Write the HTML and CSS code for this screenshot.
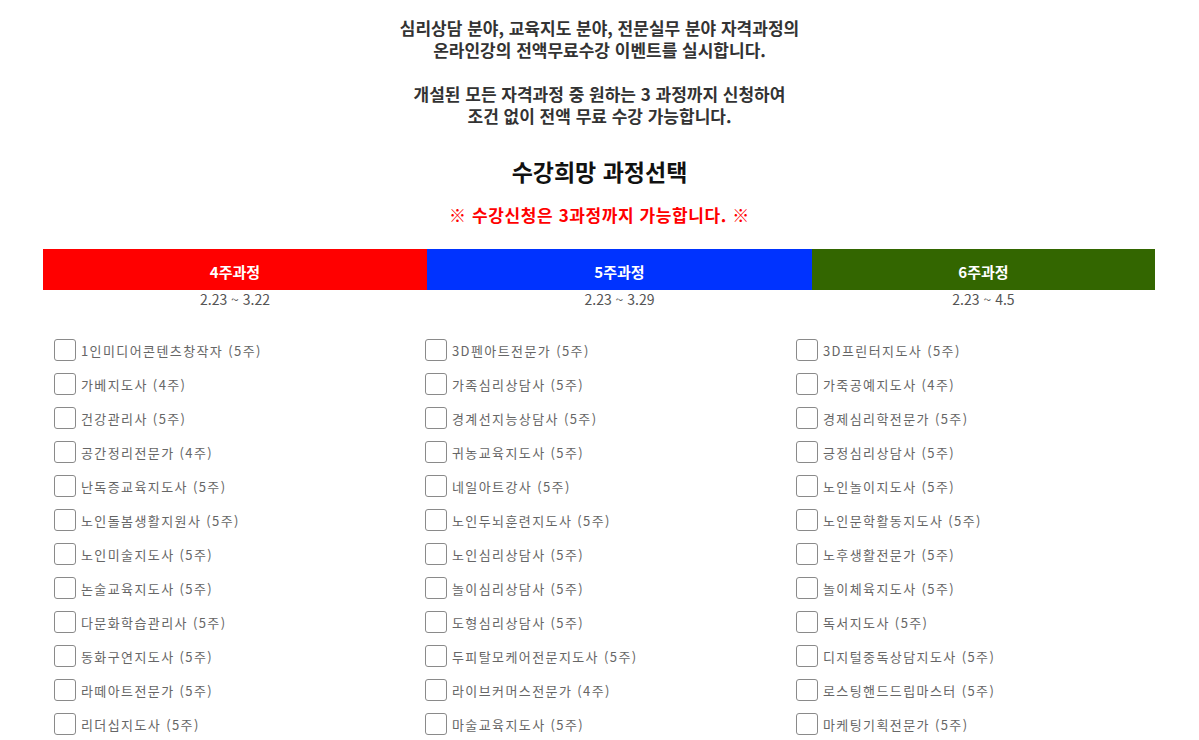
FILE: index.html
```html
<!DOCTYPE html>
<html lang="ko">
<head>
<meta charset="utf-8">
<title>수강희망 과정선택</title>
<link rel="stylesheet" href="styles.css">
</head>
<body>
<div class="page">
  <p class="intro">심리상담 분야, 교육지도 분야, 전문실무 분야 자격과정의<br>온라인강의 전액무료수강 이벤트를 실시합니다.<br><br>개설된 모든 자격과정 중 원하는 3 과정까지 신청하여<br>조건 없이 전액 무료 수강 가능합니다.</p>
  <h2 class="title">수강희망 과정선택</h2>
  <p class="notice">※ 수강신청은 3과정까지 가능합니다. ※</p>

  <div class="periods">
    <div class="period">
      <div class="bar bar-red">4주과정</div>
      <div class="date">2.23 ~ 3.22</div>
    </div>
    <div class="period">
      <div class="bar bar-blue">5주과정</div>
      <div class="date">2.23 ~ 3.29</div>
    </div>
    <div class="period">
      <div class="bar bar-green">6주과정</div>
      <div class="date">2.23 ~ 4.5</div>
    </div>
  </div>

  <div class="courses">
    <label class="course"><input type="checkbox"><span>1인미디어콘텐츠창작자 (5주)</span></label>
    <label class="course"><input type="checkbox"><span>3D펜아트전문가 (5주)</span></label>
    <label class="course"><input type="checkbox"><span>3D프린터지도사 (5주)</span></label>
    <label class="course"><input type="checkbox"><span>가베지도사 (4주)</span></label>
    <label class="course"><input type="checkbox"><span>가족심리상담사 (5주)</span></label>
    <label class="course"><input type="checkbox"><span>가죽공예지도사 (4주)</span></label>
    <label class="course"><input type="checkbox"><span>건강관리사 (5주)</span></label>
    <label class="course"><input type="checkbox"><span>경계선지능상담사 (5주)</span></label>
    <label class="course"><input type="checkbox"><span>경제심리학전문가 (5주)</span></label>
    <label class="course"><input type="checkbox"><span>공간정리전문가 (4주)</span></label>
    <label class="course"><input type="checkbox"><span>귀농교육지도사 (5주)</span></label>
    <label class="course"><input type="checkbox"><span>긍정심리상담사 (5주)</span></label>
    <label class="course"><input type="checkbox"><span>난독증교육지도사 (5주)</span></label>
    <label class="course"><input type="checkbox"><span>네일아트강사 (5주)</span></label>
    <label class="course"><input type="checkbox"><span>노인놀이지도사 (5주)</span></label>
    <label class="course"><input type="checkbox"><span>노인돌봄생활지원사 (5주)</span></label>
    <label class="course"><input type="checkbox"><span>노인두뇌훈련지도사 (5주)</span></label>
    <label class="course"><input type="checkbox"><span>노인문학활동지도사 (5주)</span></label>
    <label class="course"><input type="checkbox"><span>노인미술지도사 (5주)</span></label>
    <label class="course"><input type="checkbox"><span>노인심리상담사 (5주)</span></label>
    <label class="course"><input type="checkbox"><span>노후생활전문가 (5주)</span></label>
    <label class="course"><input type="checkbox"><span>논술교육지도사 (5주)</span></label>
    <label class="course"><input type="checkbox"><span>놀이심리상담사 (5주)</span></label>
    <label class="course"><input type="checkbox"><span>놀이체육지도사 (5주)</span></label>
    <label class="course"><input type="checkbox"><span>다문화학습관리사 (5주)</span></label>
    <label class="course"><input type="checkbox"><span>도형심리상담사 (5주)</span></label>
    <label class="course"><input type="checkbox"><span>독서지도사 (5주)</span></label>
    <label class="course"><input type="checkbox"><span>동화구연지도사 (5주)</span></label>
    <label class="course"><input type="checkbox"><span>두피탈모케어전문지도사 (5주)</span></label>
    <label class="course"><input type="checkbox"><span>디지털중독상담지도사 (5주)</span></label>
    <label class="course"><input type="checkbox"><span>라떼아트전문가 (5주)</span></label>
    <label class="course"><input type="checkbox"><span>라이브커머스전문가 (4주)</span></label>
    <label class="course"><input type="checkbox"><span>로스팅핸드드립마스터 (5주)</span></label>
    <label class="course"><input type="checkbox"><span>리더십지도사 (5주)</span></label>
    <label class="course"><input type="checkbox"><span>마술교육지도사 (5주)</span></label>
    <label class="course"><input type="checkbox"><span>마케팅기획전문가 (5주)</span></label>
  </div>
</div>
</body>
</html>
```

FILE: styles.css
```css
* { box-sizing: border-box; }

html, body {
  margin: 0;
  padding: 0;
  background: #fff;
}

body {
  font-family: "Noto Sans CJK KR", "Noto Sans", sans-serif;
  color: #333;
}

.page {
  width: 1113px;
  margin: 0 auto;
  padding-top: 17px;
}

.intro {
  margin: 0;
  text-align: center;
  font-size: 17px;
  line-height: 22px;
  font-weight: 700;
  color: #333;
}

.title {
  margin: 29px 0 0;
  text-align: center;
  font-size: 23px;
  line-height: 30px;
  font-weight: 700;
  color: #111;
}

.notice {
  margin: 17px 0 0;
  text-align: center;
  font-size: 17px;
  line-height: 24px;
  font-weight: 700;
  letter-spacing: 0.6px;
  color: #ff0000;
}

.periods {
  margin-top: 22px;
  display: grid;
  grid-template-columns: 384px 385px 343px;
}

.bar {
  height: 41px;
  display: flex;
  align-items: center;
  justify-content: center;
  padding-top: 3px;
  color: #fff;
  font-size: 15px;
  font-weight: 700;
}

.bar-red { background: #ff0000; }
.bar-blue { background: #0033ff; }
.bar-green { background: #336600; }

.date {
  text-align: center;
  font-size: 14px;
  line-height: 18px;
  color: #555;
}

.courses {
  margin-top: 25px;
  display: grid;
  grid-template-columns: repeat(3, 371px);
}

.course {
  height: 34px;
  display: flex;
  align-items: center;
  padding-left: 11px;
  font-size: 13px;
  letter-spacing: 1.4px;
  color: #666;
  cursor: pointer;
}

.course input {
  appearance: none;
  -webkit-appearance: none;
  width: 22px;
  height: 22px;
  margin: 0 5px 0 0;
  border: 1px solid #8a8a8a;
  border-radius: 3px;
  background: #fff;
  flex: none;
}

.course input:checked {
  background: #0033ff;
  border-color: #0033ff;
}
```
